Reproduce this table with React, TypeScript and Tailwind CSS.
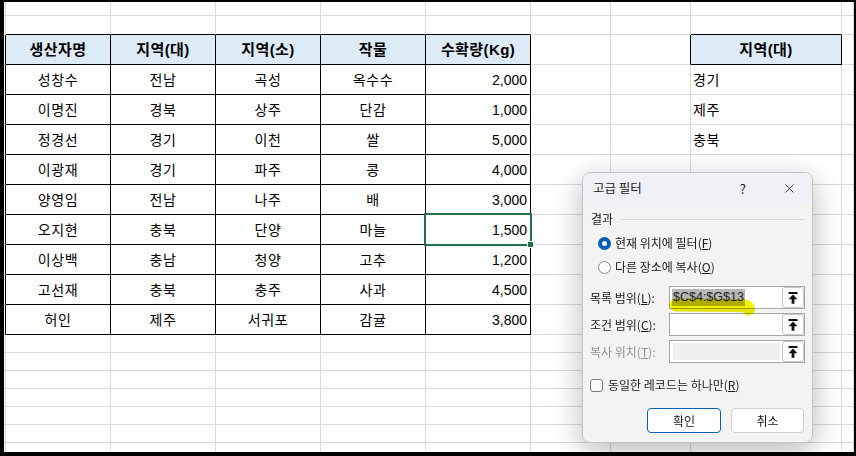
import { X } from 'lucide-react';

const widths = [
  'w-[2px]',
  'w-[105px]',
  'w-[105px]',
  'w-[105px]',
  'w-[105px]',
  'w-[105px]',
  'w-[80px]',
  'w-[80px]',
  'w-[151px]',
  'w-[12px]',
];

const heights = [
  'h-[14px]',
  'h-[19px]',
  ...Array(10).fill('h-[30px]'),
  ...Array(7).fill('h-[18px]'),
];

const header = ['생산자명', '지역(대)', '지역(소)', '작물', '수확량(Kg)'];

const data = [
  ['성창수', '전남', '곡성', '옥수수', '2,000'],
  ['이명진', '경북', '상주', '단감', '1,000'],
  ['정경선', '경기', '이천', '쌀', '5,000'],
  ['이광재', '경기', '파주', '콩', '4,000'],
  ['양영임', '전남', '나주', '배', '3,000'],
  ['오지현', '충북', '단양', '마늘', '1,500'],
  ['이상백', '충남', '청양', '고추', '1,200'],
  ['고선재', '충북', '충주', '사과', '4,500'],
  ['허인', '제주', '서귀포', '감귤', '3,800'],
];

const criteria = ['경기', '제주', '충북'];

function Cell({ r, c }: { r: number; c: number }) {
  const inTable = r >= 2 && r <= 11;
  const rightBlack = (inTable && c <= 5) || (r === 2 && (c === 7 || c === 8));
  const bottomBlack = (r >= 1 && r <= 11 && c >= 1 && c <= 5) || ((r === 1 || r === 2) && c === 8);
  const isHeader = r === 2 && ((c >= 1 && c <= 5) || c === 8);

  let text = '';
  let align = 'justify-center';
  let numeric = false;
  if (r === 2 && c >= 1 && c <= 5) text = header[c - 1];
  if (r >= 3 && r <= 11 && c >= 1 && c <= 5) {
    text = data[r - 3][c - 1];
    if (c === 5) {
      align = 'justify-end pr-[3px]';
      numeric = true;
    }
  }
  if (r === 2 && c === 8) text = '지역(대)';
  if (r >= 3 && r <= 5 && c === 8) {
    text = criteria[r - 3];
    align = 'justify-start pl-[2px]';
  }
  const selected = r === 8 && c === 5;

  return (
    <div
      className={`relative shrink-0 flex items-center border-r border-b ${widths[c]} ${
        rightBlack ? 'border-r-black' : 'border-r-[#dadada]'
      } ${bottomBlack ? 'border-b-black' : 'border-b-[#dadada]'} ${
        isHeader ? 'bg-[#ddebf7] font-bold text-[15px] tracking-[0.4px]' : 'bg-white text-[14px]'
      } ${align}`}
    >
      {text && (
        <span className={`leading-none text-black whitespace-nowrap ${numeric || isHeader ? '' : 'tracking-[0.6px]'}`}>
          {text}
        </span>
      )}
      {selected && (
        <>
          <div className="absolute z-10 -left-[2px] -top-[2px] w-[108px] h-[33px] border-2 border-[#217346]" />
          <div className="absolute z-20 left-[101px] top-[26px] w-[7px] h-[7px] bg-[#217346] border border-white" />
        </>
      )}
    </div>
  );
}

function UpButton() {
  return (
    <div className="ml-auto h-full w-[22px] flex items-center justify-center bg-white border border-[#c6c6c6] rounded-[3px]">
      <svg width="10" height="12" viewBox="0 0 10 12">
        <rect x="0.5" y="0" width="9" height="2" fill="#111" />
        <path d="M5 2.6 L9.4 7.2 L6.4 7.2 L6.4 11.8 L3.6 11.8 L3.6 7.2 L0.6 7.2 Z" fill="#111" />
      </svg>
    </div>
  );
}

function Radio({ checked }: { checked?: boolean }) {
  return checked ? (
    <div className="w-[13px] h-[13px] rounded-full bg-[#005fb8] flex items-center justify-center">
      <div className="w-[5px] h-[5px] rounded-full bg-white" />
    </div>
  ) : (
    <div className="w-[13px] h-[13px] rounded-full border border-[#8a8a8a] bg-[#fafafa]" />
  );
}

function Dialog() {
  return (
    <div className="absolute z-30 left-[578px] top-[170px] w-[231px] h-[271px] rounded-[8px] border border-[#c4c4c4] bg-[#f3f3f3] shadow-[0_8px_30px_rgba(0,0,0,0.28)] flex flex-col overflow-hidden font-['Noto_Sans_CJK_KR',sans-serif] text-[12px] text-[#1b1b1b] leading-none">
      <div className="h-[30px] shrink-0 flex items-center pl-[10px] pr-[15px] bg-[#eff1f6]">
        <span className="text-[12.5px]">고급 필터</span>
        <span className="ml-auto mr-[36px] text-[13px]">?</span>
        <X size={15} strokeWidth={1.3} className="text-[#1b1b1b]" />
      </div>
      <div className="flex flex-col pl-[7px] pr-[7px]">
        <div className="mt-[8px] h-[16px] flex items-center gap-[8px]">
          <span className="pl-[1px]">결과</span>
          <div className="flex-1 h-px bg-[#d8d8d8]" />
        </div>
        <div className="mt-[4px] h-[24px] flex items-center gap-[4px] pl-[8px]">
          <Radio checked />
          <span>
            현재 위치에 필터(<u>F</u>)
          </span>
        </div>
        <div className="h-[24px] flex items-center gap-[4px] pl-[8px]">
          <Radio />
          <span>
            다른 장소에 복사(<u>O</u>)
          </span>
        </div>
        <div className="mt-[7px] flex flex-col gap-[4px]">
          <div className="h-[23px] flex items-center">
            <span className="w-[79px]">
              목록 범위(<u>L</u>):
            </span>
            <div className="relative flex-1 h-full flex items-center bg-white border border-[#a6a6a6]">
              <span className="ml-[2px] bg-[#b8b8b8] text-[12.5px] font-['Liberation_Sans',sans-serif] px-px py-[2px] text-[#222]">
                $C$4:$G$13
              </span>
              <svg
                className="absolute z-10 left-0 top-0 overflow-visible mix-blend-multiply pointer-events-none"
                width="90"
                height="30"
              >
                <path
                  d="M6 18 L72 18.5 Q78 19 78.5 22"
                  stroke="#f0f000"
                  strokeWidth="13"
                  strokeLinecap="round"
                  strokeLinejoin="round"
                  fill="none"
                />
              </svg>
              <UpButton />
            </div>
          </div>
          <div className="h-[23px] flex items-center">
            <span className="w-[79px]">
              조건 범위(<u>C</u>):
            </span>
            <div className="flex-1 h-full flex items-center bg-white border border-[#a6a6a6]">
              <UpButton />
            </div>
          </div>
          <div className="h-[23px] flex items-center">
            <span className="w-[79px] text-[#8f8f8f]">
              복사 위치(<u>T</u>):
            </span>
            <div className="flex-1 h-full flex items-center bg-white border border-[#a6a6a6] pl-[3px]">
              <div className="h-[17px] w-[107px] bg-[#f0f0f0]" />
              <UpButton />
            </div>
          </div>
        </div>
        <div className="mt-[14px] h-[16px] flex items-center gap-[5px]">
          <div className="w-[13px] h-[13px] rounded-[3px] border border-[#7a7a7a] bg-[#fafafa]" />
          <span>
            동일한 레코드는 하나만(<u>R</u>)
          </span>
        </div>
        <div className="mt-[15px] h-[25px] flex justify-end gap-[10px] pr-[1px]">
          <div className="w-[74px] h-full flex items-center justify-center bg-white border border-[#005fb8] rounded-[4px]">
            확인
          </div>
          <div className="w-[73px] h-full flex items-center justify-center bg-white border border-[#cfcfcf] rounded-[4px]">
            취소
          </div>
        </div>
      </div>
    </div>
  );
}

export default function App() {
  return (
    <div className="w-[856px] h-[456px] bg-white">
      <div className="relative w-full h-full border-l-4 border-t-2 border-r-2 border-b-4 border-black overflow-hidden font-['Liberation_Sans','Noto_Sans_CJK_KR',sans-serif]">
        <div className="flex flex-col">
          {heights.map((h, r) => (
            <div key={r} className={`flex shrink-0 ${h}`}>
              {widths.map((_, c) => (
                <Cell key={c} r={r} c={c} />
              ))}
            </div>
          ))}
        </div>
        <Dialog />
      </div>
    </div>
  );
}
